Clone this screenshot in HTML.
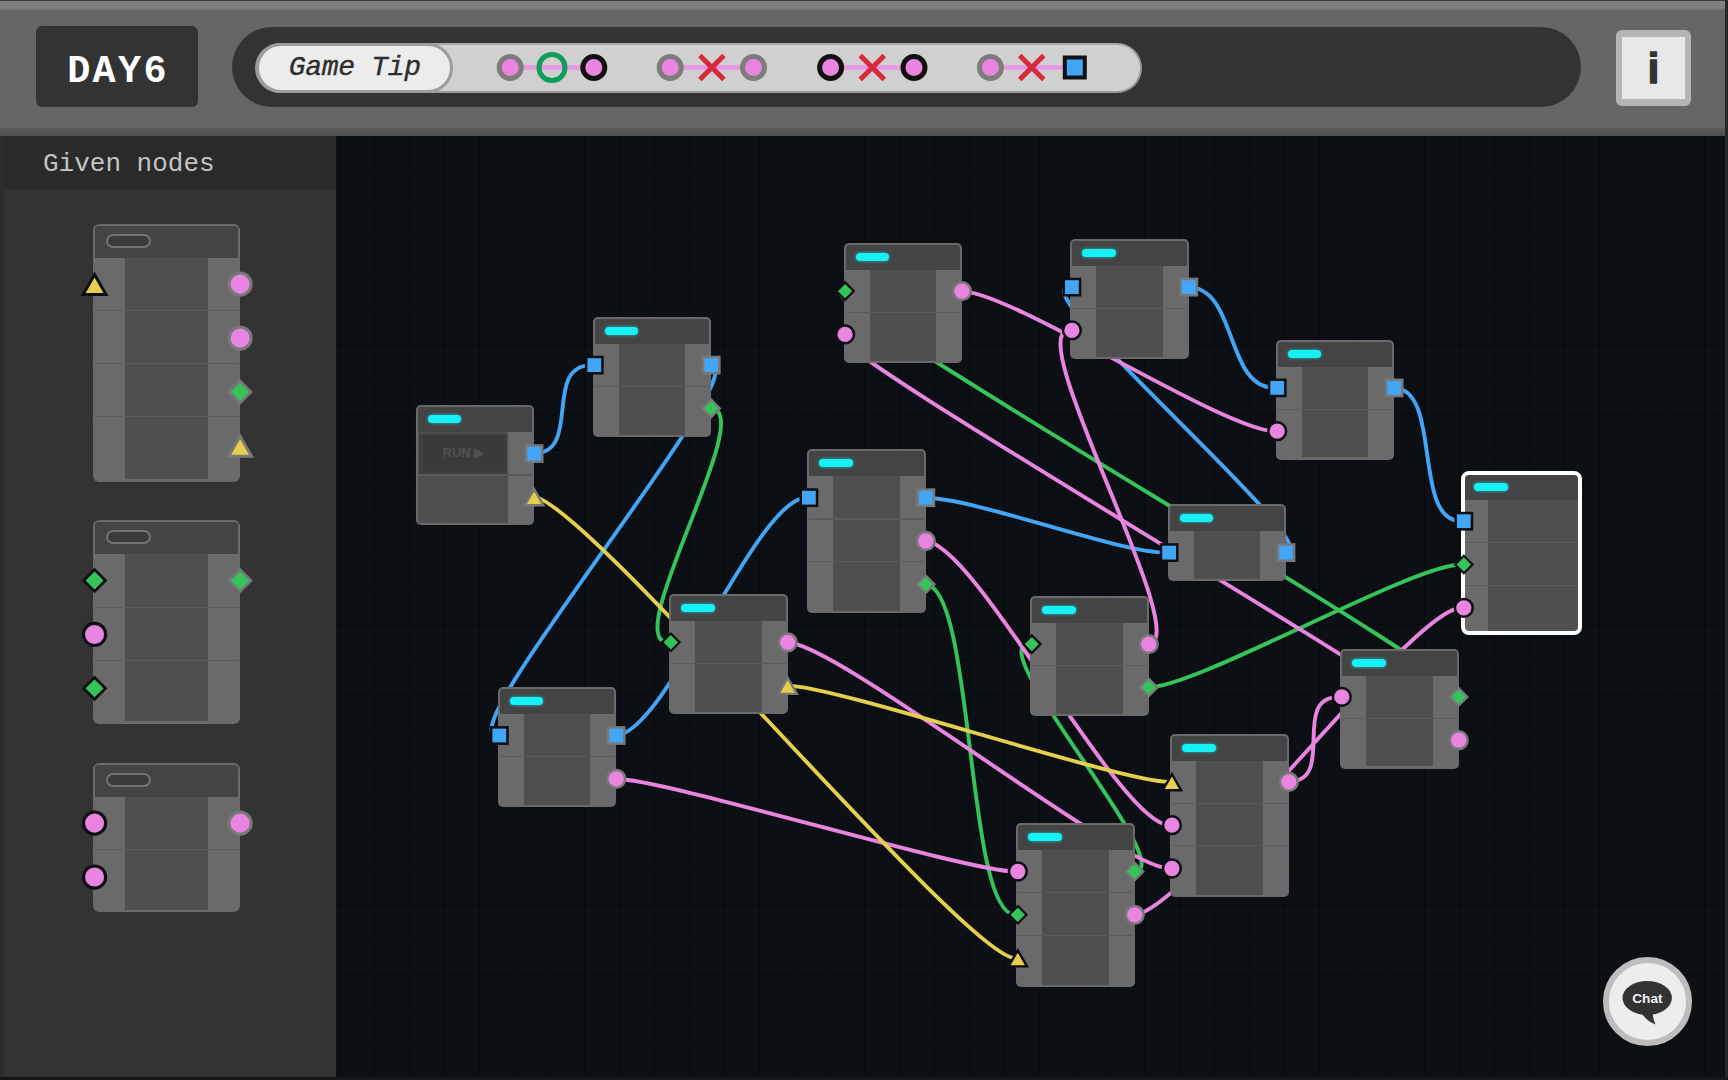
<!DOCTYPE html><html lang="en"><head><meta charset="utf-8"><title>DAY6</title><style>
*{margin:0;padding:0;box-sizing:border-box}
html,body{width:1728px;height:1080px;overflow:hidden;background:#666}
body{position:relative;font-family:"Liberation Mono","DejaVu Sans Mono",monospace}
.abs{position:absolute}
.layer{position:absolute;left:0;top:0;pointer-events:none}
#canvas{position:absolute;left:336px;top:135px;width:1392px;height:945px;background-color:#0c1015;
background-image:linear-gradient(to right,#07090c 0,#07090c 1.1px,transparent 1.1px),linear-gradient(to bottom,#07090c 0,#07090c 1.1px,transparent 1.1px);
background-size:35px 35px;background-position:3.05px -0.9px}
#topbevel{position:absolute;left:0;top:0;width:1728px;height:12px;background:linear-gradient(to bottom,#3a3a3a 0,#3a3a3a 1px,#808080 1.5px,#808080 8px,#666 11px)}
#hdrshadow{position:absolute;left:0;top:128px;width:1728px;height:7.5px;background:linear-gradient(to bottom,#5c5c5c,#4c4d4f)}
#side{position:absolute;left:0;top:135.5px;width:336px;height:945px;background:#333}
#sidetitle{position:absolute;left:0;top:135.5px;width:336px;height:53px;background:#2a2a2a;color:#c4c4c4;font-size:26px;line-height:53px;padding-left:43px;padding-top:2.5px;white-space:pre}
#sideedge{position:absolute;left:0;top:135.5px;width:4px;height:945px;background:#2c2c2c}
#day{position:absolute;left:36px;top:26px;width:162px;height:81px;background:#333;border-radius:6px;color:#fff;font-weight:bold;font-size:38.5px;line-height:81px;text-align:center;letter-spacing:2.3px;padding-top:6px;padding-left:2px}
#pill{position:absolute;left:232px;top:27px;width:1349px;height:80px;border-radius:40px;background:#333}
#bar{position:absolute;left:255px;top:42.5px;width:887px;height:50.5px;border-radius:25.5px;background:#d0d0d0;border:2.5px solid #9a9a9a;border-top-color:#a8a8a8}
#tip{position:absolute;left:255.5px;top:42.5px;width:197px;height:50px;border-radius:25px;background:#ececec;border:3px solid #9c9c9c;color:#2e2e2e;font-style:italic;font-weight:normal;font-size:28px;line-height:43px;text-align:center;white-space:pre;letter-spacing:-0.3px;padding-left:1.5px;-webkit-text-stroke:0.35px #2e2e2e}
#info{position:absolute;left:1616px;top:30px;width:75px;height:76px;border-radius:6px;background:#e8e8e8;border:solid #b5b5b5;border-width:7px 6px 7px 6px}
#redge{position:absolute;left:1725.3px;top:0;width:3px;height:1080px;background:#25272a}
#bedge{position:absolute;left:0;top:1076.7px;width:1728px;height:3.3px;background:#161718}
#chat{position:absolute;left:1602.5px;top:956.5px;width:89.5px;height:89.5px;border-radius:50%;background:#ededed;border:6px solid #bdbdbd}
.nd{position:absolute;background:#6a6a6a;overflow:hidden}
.selring{position:absolute;border:4.7px solid #fff;border-radius:8px}
.hd{position:absolute;background:#444;border-radius:3px 3px 0 0}
.ct{position:absolute;background:#4f4f4f}
.sp{position:absolute;height:1.2px;background:#5b5b5b}
.cy{position:absolute;width:33.6px;height:8px;border-radius:4px;background:#17f1f6;box-shadow:0 0 3px 0.5px rgba(0,240,255,.55)}
.op{position:absolute;width:45px;height:14.5px;border-radius:7.3px;background:#3b3b3b;border:2px solid #727272}
.rb{position:absolute;left:3.5px;top:28.5px;width:87.5px;height:40px;background:#3f3f3f;}
.rb span{position:absolute;left:3.5px;top:2.5px;right:2.5px;bottom:2.5px;background:#3a3a3a;color:#515151;font-family:"Liberation Sans",sans-serif;font-weight:bold;font-size:13px;line-height:33px;text-align:center;white-space:pre}
</style></head><body>
<div id="canvas"></div>
<svg class="layer" width="1728" height="1080" viewBox="0 0 1728 1080"><g fill="none" stroke-width="3.9" stroke-linecap="round"><path d="M533.1 453.6 C583.1 453.6 541.8 365.1 591.8 365.1" stroke="#42a5f5"/><path d="M710.2 365.1 C760.2 365.1 446.8 735.5 496.8 735.5" stroke="#42a5f5"/><path d="M615.2 735.5 C665.2 735.5 756.4 497.7 806.4 497.7" stroke="#42a5f5"/><path d="M924.8 497.7 C974.8 497.7 1116.6 552.6 1166.6 552.6" stroke="#42a5f5"/><path d="M1285 552.6 C1335 552.6 1019.4 287.1 1069.4 287.1" stroke="#42a5f5"/><path d="M1187.8 287.1 C1237.8 287.1 1224.7 387.9 1274.7 387.9" stroke="#42a5f5"/><path d="M1393.1 387.9 C1443.1 387.9 1411.3 521.2 1461.3 521.2" stroke="#42a5f5"/><path d="M710.2 408.4 C760.2 408.4 618.3 642.3 668.3 642.3" stroke="#35c45a"/><path d="M924.8 584.3 C974.8 584.3 965.3 914.8 1015.3 914.8" stroke="#35c45a"/><path d="M1133.7 871.5 C1183.7 871.5 979.3 644.1 1029.3 644.1" stroke="#35c45a"/><path d="M1147.7 687.4 C1197.7 687.4 1411.3 564.5 1461.3 564.5" stroke="#35c45a"/><path d="M1457.7 696.9 C1507.7 696.9 792.6 291.1 842.6 291.1" stroke="#35c45a"/><path d="M961 291.1 C1011 291.1 1224.7 431.2 1274.7 431.2" stroke="#e985e1"/><path d="M1147.7 644.1 C1197.7 644.1 1019.4 330.4 1069.4 330.4" stroke="#e985e1"/><path d="M1457.7 740.2 C1507.7 740.2 792.6 334.4 842.6 334.4" stroke="#e985e1"/><path d="M924.8 541 C974.8 541 1119.4 825.2 1169.4 825.2" stroke="#e985e1"/><path d="M786.7 642.3 C836.7 642.3 1119.4 868.5 1169.4 868.5" stroke="#e985e1"/><path d="M615.2 778.8 C665.2 778.8 965.3 871.5 1015.3 871.5" stroke="#e985e1"/><path d="M1287.8 781.9 C1337.8 781.9 1289.3 696.9 1339.3 696.9" stroke="#e985e1"/><path d="M1133.7 914.8 C1183.7 914.8 1411.3 607.8 1461.3 607.8" stroke="#e985e1"/><path d="M533.1 496.9 C583.1 496.9 965.3 958.1 1015.3 958.1" stroke="#e6cf4e"/><path d="M786.7 685.6 C836.7 685.6 1119.4 781.9 1169.4 781.9" stroke="#e6cf4e"/></g></svg>
<div id="side"></div><div id="sidetitle">Given nodes</div><div id="sideedge"></div>
<div class="nd" style="left:415.7px;top:405.3px;width:118.7px;height:120px;border-radius:5px"><div class="hd" style="left:2px;top:2px;width:114.7px;height:25px"></div><div class="ct" style="left:2px;top:27px;width:90.7px;height:90.9px"></div><div class="sp" style="left:2px;top:69.1px;width:114.7px"></div><div class="cy" style="left:12px;top:10px"></div><div class="rb"><span>RUN &#9654;</span></div></div><div class="nd" style="left:592.8px;top:316.8px;width:118.7px;height:120px;border-radius:5px"><div class="hd" style="left:2px;top:2px;width:114.7px;height:25px"></div><div class="ct" style="left:26px;top:27px;width:66.7px;height:90.9px"></div><div class="sp" style="left:2px;top:69.1px;width:114.7px"></div><div class="cy" style="left:12px;top:10px"></div></div><div class="nd" style="left:843.6px;top:242.8px;width:118.7px;height:120px;border-radius:5px"><div class="hd" style="left:2px;top:2px;width:114.7px;height:25px"></div><div class="ct" style="left:26px;top:27px;width:66.7px;height:90.9px"></div><div class="sp" style="left:2px;top:69.1px;width:114.7px"></div><div class="cy" style="left:12px;top:10px"></div></div><div class="nd" style="left:1070.4px;top:238.8px;width:118.7px;height:120px;border-radius:5px"><div class="hd" style="left:2px;top:2px;width:114.7px;height:25px"></div><div class="ct" style="left:26px;top:27px;width:66.7px;height:90.9px"></div><div class="sp" style="left:2px;top:69.1px;width:114.7px"></div><div class="cy" style="left:12px;top:10px"></div></div><div class="nd" style="left:1275.7px;top:339.6px;width:118.7px;height:120px;border-radius:5px"><div class="hd" style="left:2px;top:2px;width:114.7px;height:25px"></div><div class="ct" style="left:26px;top:27px;width:66.7px;height:90.9px"></div><div class="sp" style="left:2px;top:69.1px;width:114.7px"></div><div class="cy" style="left:12px;top:10px"></div></div><div class="nd" style="left:807.4px;top:449.4px;width:118.7px;height:163.5px;border-radius:5px"><div class="hd" style="left:2px;top:2px;width:114.7px;height:25px"></div><div class="ct" style="left:26px;top:27px;width:66.7px;height:134.4px"></div><div class="sp" style="left:2px;top:69.1px;width:114.7px"></div><div class="sp" style="left:2px;top:111.7px;width:114.7px"></div><div class="cy" style="left:12px;top:10px"></div></div><div class="nd" style="left:1167.6px;top:504.3px;width:118.7px;height:76.5px;border-radius:5px"><div class="hd" style="left:2px;top:2px;width:114.7px;height:25px"></div><div class="ct" style="left:26px;top:27px;width:66.7px;height:47.4px"></div><div class="cy" style="left:12px;top:10px"></div></div><div class="nd" style="left:1462.3px;top:472.9px;width:118.7px;height:161.3px;border-radius:5px"><div class="hd" style="left:2px;top:2px;width:114.7px;height:25px"></div><div class="ct" style="left:26px;top:27px;width:90.7px;height:132.2px"></div><div class="sp" style="left:2px;top:69.1px;width:114.7px"></div><div class="sp" style="left:2px;top:111.7px;width:114.7px"></div><div class="cy" style="left:12px;top:10px"></div></div><div class="selring" style="left:1460.8px;top:471.2px;width:121.4px;height:164.3px"></div><div class="nd" style="left:669.3px;top:594px;width:118.7px;height:120px;border-radius:5px"><div class="hd" style="left:2px;top:2px;width:114.7px;height:25px"></div><div class="ct" style="left:26px;top:27px;width:66.7px;height:90.9px"></div><div class="sp" style="left:2px;top:69.1px;width:114.7px"></div><div class="cy" style="left:12px;top:10px"></div></div><div class="nd" style="left:1030.3px;top:595.8px;width:118.7px;height:120px;border-radius:5px"><div class="hd" style="left:2px;top:2px;width:114.7px;height:25px"></div><div class="ct" style="left:26px;top:27px;width:66.7px;height:90.9px"></div><div class="sp" style="left:2px;top:69.1px;width:114.7px"></div><div class="cy" style="left:12px;top:10px"></div></div><div class="nd" style="left:497.8px;top:687.2px;width:118.7px;height:120px;border-radius:5px"><div class="hd" style="left:2px;top:2px;width:114.7px;height:25px"></div><div class="ct" style="left:26px;top:27px;width:66.7px;height:90.9px"></div><div class="sp" style="left:2px;top:69.1px;width:114.7px"></div><div class="cy" style="left:12px;top:10px"></div></div><div class="nd" style="left:1340.3px;top:648.6px;width:118.7px;height:120px;border-radius:5px"><div class="hd" style="left:2px;top:2px;width:114.7px;height:25px"></div><div class="ct" style="left:26px;top:27px;width:66.7px;height:90.9px"></div><div class="sp" style="left:2px;top:69.1px;width:114.7px"></div><div class="cy" style="left:12px;top:10px"></div></div><div class="nd" style="left:1170.4px;top:733.6px;width:118.7px;height:163.5px;border-radius:5px"><div class="hd" style="left:2px;top:2px;width:114.7px;height:25px"></div><div class="ct" style="left:26px;top:27px;width:66.7px;height:134.4px"></div><div class="sp" style="left:2px;top:69.1px;width:114.7px"></div><div class="sp" style="left:2px;top:111.7px;width:114.7px"></div><div class="cy" style="left:12px;top:10px"></div></div><div class="nd" style="left:1016.3px;top:823.2px;width:118.7px;height:163.5px;border-radius:5px"><div class="hd" style="left:2px;top:2px;width:114.7px;height:25px"></div><div class="ct" style="left:26px;top:27px;width:66.7px;height:134.4px"></div><div class="sp" style="left:2px;top:69.1px;width:114.7px"></div><div class="sp" style="left:2px;top:111.7px;width:114.7px"></div><div class="cy" style="left:12px;top:10px"></div></div><div class="nd" style="left:92.7px;top:224px;width:147.78px;height:257.72px;border-radius:6.23px"><div class="hd" style="left:2px;top:2px;width:143.78px;height:31.62px"></div><div class="ct" style="left:32.37px;top:33.62px;width:83.04px;height:221.49px"></div><div class="sp" style="left:2px;top:86.15px;width:143.78px"></div><div class="sp" style="left:2px;top:139.19px;width:143.78px"></div><div class="sp" style="left:2px;top:192.23px;width:143.78px"></div><div class="op" style="left:13.5px;top:9.5px"></div></div><div class="nd" style="left:92.7px;top:520.4px;width:147.78px;height:203.56px;border-radius:6.23px"><div class="hd" style="left:2px;top:2px;width:143.78px;height:31.62px"></div><div class="ct" style="left:32.37px;top:33.62px;width:83.04px;height:167.33px"></div><div class="sp" style="left:2px;top:86.15px;width:143.78px"></div><div class="sp" style="left:2px;top:139.19px;width:143.78px"></div><div class="op" style="left:13.5px;top:9.5px"></div></div><div class="nd" style="left:92.7px;top:763px;width:147.78px;height:149.4px;border-radius:6.23px"><div class="hd" style="left:2px;top:2px;width:143.78px;height:31.62px"></div><div class="ct" style="left:32.37px;top:33.62px;width:83.04px;height:113.17px"></div><div class="sp" style="left:2px;top:86.15px;width:143.78px"></div><div class="op" style="left:13.5px;top:9.5px"></div></div>
<svg class="layer" width="1728" height="1080" viewBox="0 0 1728 1080"><rect x="525.95" y="445.45" width="16.3" height="16.3" fill="#42a5f5" stroke="#787878" stroke-width="2.5"/><polygon points="534.1,489.1 543.3,505.2 524.9,505.2" fill="#e6cf4e" stroke="#787878" stroke-width="2.4" stroke-linejoin="miter"/><rect x="586.15" y="356.95" width="16.3" height="16.3" fill="#42a5f5" stroke="#0c0e12" stroke-width="2.5"/><rect x="703.05" y="356.95" width="16.3" height="16.3" fill="#42a5f5" stroke="#787878" stroke-width="2.5"/><polygon points="711.2,399.65 719.95,408.4 711.2,417.15 702.45,408.4" fill="#35c45a" stroke="#787878" stroke-width="2.2" stroke-linejoin="miter"/><polygon points="845.1,282.35 853.85,291.1 845.1,299.85 836.35,291.1" fill="#35c45a" stroke="#0c0e12" stroke-width="2.2" stroke-linejoin="miter"/><circle cx="845.1" cy="334.4" r="8.9" fill="#e985e1" stroke="#0c0e12" stroke-width="2.5"/><circle cx="962" cy="291.1" r="8.9" fill="#e985e1" stroke="#787878" stroke-width="2.5"/><rect x="1063.75" y="278.95" width="16.3" height="16.3" fill="#42a5f5" stroke="#0c0e12" stroke-width="2.5"/><circle cx="1071.9" cy="330.4" r="8.9" fill="#e985e1" stroke="#0c0e12" stroke-width="2.5"/><rect x="1180.65" y="278.95" width="16.3" height="16.3" fill="#42a5f5" stroke="#787878" stroke-width="2.5"/><rect x="1269.05" y="379.75" width="16.3" height="16.3" fill="#42a5f5" stroke="#0c0e12" stroke-width="2.5"/><circle cx="1277.2" cy="431.2" r="8.9" fill="#e985e1" stroke="#0c0e12" stroke-width="2.5"/><rect x="1385.95" y="379.75" width="16.3" height="16.3" fill="#42a5f5" stroke="#787878" stroke-width="2.5"/><rect x="800.75" y="489.55" width="16.3" height="16.3" fill="#42a5f5" stroke="#0c0e12" stroke-width="2.5"/><rect x="917.65" y="489.55" width="16.3" height="16.3" fill="#42a5f5" stroke="#787878" stroke-width="2.5"/><circle cx="925.8" cy="541" r="8.9" fill="#e985e1" stroke="#787878" stroke-width="2.5"/><polygon points="925.8,575.55 934.55,584.3 925.8,593.05 917.05,584.3" fill="#35c45a" stroke="#787878" stroke-width="2.2" stroke-linejoin="miter"/><rect x="1160.95" y="544.45" width="16.3" height="16.3" fill="#42a5f5" stroke="#0c0e12" stroke-width="2.5"/><rect x="1277.85" y="544.45" width="16.3" height="16.3" fill="#42a5f5" stroke="#787878" stroke-width="2.5"/><rect x="1455.65" y="513.05" width="16.3" height="16.3" fill="#42a5f5" stroke="#0c0e12" stroke-width="2.5"/><polygon points="1463.8,555.75 1472.55,564.5 1463.8,573.25 1455.05,564.5" fill="#35c45a" stroke="#0c0e12" stroke-width="2.2" stroke-linejoin="miter"/><circle cx="1463.8" cy="607.8" r="8.9" fill="#e985e1" stroke="#0c0e12" stroke-width="2.5"/><polygon points="670.8,633.55 679.55,642.3 670.8,651.05 662.05,642.3" fill="#35c45a" stroke="#0c0e12" stroke-width="2.2" stroke-linejoin="miter"/><circle cx="787.7" cy="642.3" r="8.9" fill="#e985e1" stroke="#787878" stroke-width="2.5"/><polygon points="787.7,677.8 796.9,693.9 778.5,693.9" fill="#e6cf4e" stroke="#787878" stroke-width="2.4" stroke-linejoin="miter"/><polygon points="1031.8,635.35 1040.55,644.1 1031.8,652.85 1023.05,644.1" fill="#35c45a" stroke="#0c0e12" stroke-width="2.2" stroke-linejoin="miter"/><circle cx="1148.7" cy="644.1" r="8.9" fill="#e985e1" stroke="#787878" stroke-width="2.5"/><polygon points="1148.7,678.65 1157.45,687.4 1148.7,696.15 1139.95,687.4" fill="#35c45a" stroke="#787878" stroke-width="2.2" stroke-linejoin="miter"/><rect x="491.15" y="727.35" width="16.3" height="16.3" fill="#42a5f5" stroke="#0c0e12" stroke-width="2.5"/><rect x="608.05" y="727.35" width="16.3" height="16.3" fill="#42a5f5" stroke="#787878" stroke-width="2.5"/><circle cx="616.2" cy="778.8" r="8.9" fill="#e985e1" stroke="#787878" stroke-width="2.5"/><circle cx="1341.8" cy="696.9" r="8.9" fill="#e985e1" stroke="#0c0e12" stroke-width="2.5"/><polygon points="1458.7,688.15 1467.45,696.9 1458.7,705.65 1449.95,696.9" fill="#35c45a" stroke="#787878" stroke-width="2.2" stroke-linejoin="miter"/><circle cx="1458.7" cy="740.2" r="8.9" fill="#e985e1" stroke="#787878" stroke-width="2.5"/><polygon points="1171.9,774.1 1181.1,790.2 1162.7,790.2" fill="#e6cf4e" stroke="#0c0e12" stroke-width="2.4" stroke-linejoin="miter"/><circle cx="1171.9" cy="825.2" r="8.9" fill="#e985e1" stroke="#0c0e12" stroke-width="2.5"/><circle cx="1171.9" cy="868.5" r="8.9" fill="#e985e1" stroke="#0c0e12" stroke-width="2.5"/><circle cx="1288.8" cy="781.9" r="8.9" fill="#e985e1" stroke="#787878" stroke-width="2.5"/><circle cx="1017.8" cy="871.5" r="8.9" fill="#e985e1" stroke="#0c0e12" stroke-width="2.5"/><polygon points="1017.8,906.05 1026.55,914.8 1017.8,923.55 1009.05,914.8" fill="#35c45a" stroke="#0c0e12" stroke-width="2.2" stroke-linejoin="miter"/><polygon points="1017.8,950.3 1027,966.4 1008.6,966.4" fill="#e6cf4e" stroke="#0c0e12" stroke-width="2.4" stroke-linejoin="miter"/><polygon points="1134.7,862.75 1143.45,871.5 1134.7,880.25 1125.95,871.5" fill="#35c45a" stroke="#787878" stroke-width="2.2" stroke-linejoin="miter"/><circle cx="1134.7" cy="914.8" r="8.9" fill="#e985e1" stroke="#787878" stroke-width="2.5"/><polygon points="94.57,274.42 106.02,294.47 83.11,294.47" fill="#e6cf4e" stroke="#0c0e12" stroke-width="2.99" stroke-linejoin="miter"/><circle cx="240.11" cy="284.13" r="11.08" fill="#e985e1" stroke="#787878" stroke-width="3.11"/><circle cx="240.11" cy="338.04" r="11.08" fill="#e985e1" stroke="#787878" stroke-width="3.11"/><polygon points="240.11,381.06 251,391.95 240.11,402.84 229.21,391.95" fill="#35c45a" stroke="#787878" stroke-width="2.74" stroke-linejoin="miter"/><polygon points="240.11,436.15 251.56,456.19 228.65,456.19" fill="#e6cf4e" stroke="#787878" stroke-width="2.99" stroke-linejoin="miter"/><polygon points="94.57,569.64 105.46,580.53 94.57,591.43 83.67,580.53" fill="#35c45a" stroke="#0c0e12" stroke-width="2.74" stroke-linejoin="miter"/><circle cx="94.57" cy="634.44" r="11.08" fill="#e985e1" stroke="#0c0e12" stroke-width="3.11"/><polygon points="94.57,677.46 105.46,688.35 94.57,699.24 83.67,688.35" fill="#35c45a" stroke="#0c0e12" stroke-width="2.74" stroke-linejoin="miter"/><polygon points="240.11,569.64 251,580.53 240.11,591.43 229.21,580.53" fill="#35c45a" stroke="#787878" stroke-width="2.74" stroke-linejoin="miter"/><circle cx="94.57" cy="823.13" r="11.08" fill="#e985e1" stroke="#0c0e12" stroke-width="3.11"/><circle cx="94.57" cy="877.04" r="11.08" fill="#e985e1" stroke="#0c0e12" stroke-width="3.11"/><circle cx="240.11" cy="823.13" r="11.08" fill="#e985e1" stroke="#787878" stroke-width="3.11"/></svg>
<div id="topbevel"></div><div id="hdrshadow"></div>
<div id="day">DAY6</div><div id="pill"></div><div id="bar"></div><div id="tip">Game Tip</div>
<svg class="layer" width="1728" height="1080" viewBox="0 0 1728 1080"><path d="M510 67.5 H594" stroke="#ec94e5" stroke-width="4.6" fill="none"/><circle cx="510.2" cy="67.5" r="11" fill="#e985e1" stroke="#7d7d7d" stroke-width="5"/><circle cx="552" cy="67.5" r="13" fill="none" stroke="#0f9d58" stroke-width="5"/><circle cx="593.8" cy="67.5" r="11" fill="#e985e1" stroke="#111" stroke-width="5"/><path d="M670 67.5 H753" stroke="#ec94e5" stroke-width="4.6" fill="none"/><circle cx="670.2" cy="67.5" r="11" fill="#e985e1" stroke="#7d7d7d" stroke-width="5"/><path d="M699.9 55.5 L723.9 79.5 M723.9 55.5 L699.9 79.5" stroke="#d42a3a" stroke-width="5" fill="none"/><circle cx="753.5" cy="67.5" r="11" fill="#e985e1" stroke="#7d7d7d" stroke-width="5"/><path d="M830 67.5 H914" stroke="#ec94e5" stroke-width="4.6" fill="none"/><circle cx="830.6" cy="67.5" r="11" fill="#e985e1" stroke="#111" stroke-width="5"/><path d="M860.3 55.5 L884.3 79.5 M884.3 55.5 L860.3 79.5" stroke="#d42a3a" stroke-width="5" fill="none"/><circle cx="914" cy="67.5" r="11" fill="#e985e1" stroke="#111" stroke-width="5"/><path d="M990 67.5 H1070" stroke="#ec94e5" stroke-width="4.6" fill="none"/><circle cx="990.4" cy="67.5" r="11" fill="#e985e1" stroke="#7d7d7d" stroke-width="5"/><path d="M1019.7 55.5 L1043.7 79.5 M1043.7 55.5 L1019.7 79.5" stroke="#d42a3a" stroke-width="5" fill="none"/><rect x="1064.8" y="57.5" width="20" height="20" fill="#42a5f5" stroke="#111" stroke-width="4"/></svg>
<div id="info"></div><svg class="layer" width="1728" height="1080" viewBox="0 0 1728 1080"><text x="1653.6" y="82.6" text-anchor="middle" font-family="'Liberation Sans',sans-serif" font-weight="bold" font-size="43" fill="#333" stroke="#333" stroke-width="1.3" stroke-linejoin="round">i</text></svg>
<div id="chat"></div>
<svg class="layer" width="1728" height="1080" viewBox="0 0 1728 1080"><ellipse cx="1647.2" cy="998" rx="24.7" ry="17" fill="#333"/><path d="M1640 1011 Q1646 1021 1655.5 1024.5 Q1652 1017 1653 1010 Z" fill="#333"/><text x="1647.4" y="1002.6" text-anchor="middle" font-family="'Liberation Sans',sans-serif" font-weight="bold" font-size="13.6" fill="#f2f2f2">Chat</text></svg>
<div id="redge"></div><div id="bedge"></div>
</body></html>
